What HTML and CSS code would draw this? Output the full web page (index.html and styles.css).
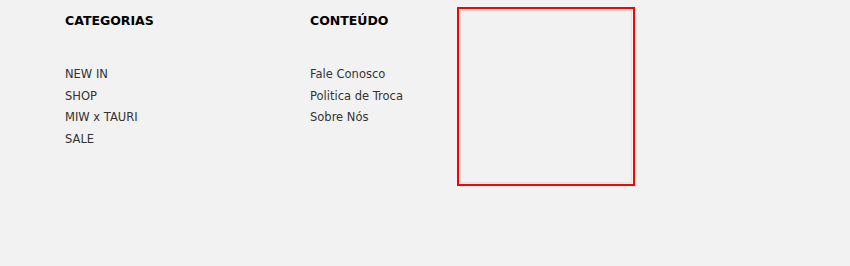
FILE: index.html
```html
<!DOCTYPE html>
<html lang="pt">
<head>
<meta charset="utf-8">
<link rel="stylesheet" href="styles.css">
</head>
<body>
<footer class="footer">
  <div class="col col-cat">
    <h3 class="col-title">CATEGORIAS</h3>
    <ul class="links">
      <li><a href="#">NEW IN</a></li>
      <li><a href="#">SHOP</a></li>
      <li><a href="#">MIW x TAURI</a></li>
      <li><a href="#">SALE</a></li>
    </ul>
  </div>
  <div class="col col-content">
    <h3 class="col-title">CONTEÚDO</h3>
    <ul class="links">
      <li><a href="#">Fale Conosco</a></li>
      <li><a href="#">Politica de Troca</a></li>
      <li><a href="#">Sobre Nós</a></li>
    </ul>
  </div>
  <div class="frame"><div class="frame-inner"></div></div>
</footer>
</body>
</html>
```

FILE: styles.css
```css
html, body {
  margin: 0;
  padding: 0;
  background: #f2f2f2;
}
body {
  width: 850px;
  height: 266px;
  font-family: "DejaVu Sans", "Open Sans", sans-serif;
}
.footer {
  display: flex;
  align-items: flex-start;
  padding: 7px 0 0 65px;
}
.col-cat {
  width: 245px;
}
.col-content {
  width: 147px;
}
.col-title {
  margin: 6px 0 0;
  font-size: 12.5px;
  line-height: 16px;
  font-weight: bold;
  color: #000;
}
.links {
  list-style: none;
  margin: 35px 0 0;
  padding: 0;
}
.links li {
  font-size: 11.5px;
  line-height: 21.7px;
}
.links a {
  color: #333;
  text-decoration: none;
}
.frame {
  width: 178px;
  height: 179px;
  box-sizing: border-box;
  border: 2px solid #ff0000;
  padding: 1px;
}
.frame-inner {
  height: 100%;
  box-sizing: border-box;
  border: 1px solid #e2e2e2;
}
```
